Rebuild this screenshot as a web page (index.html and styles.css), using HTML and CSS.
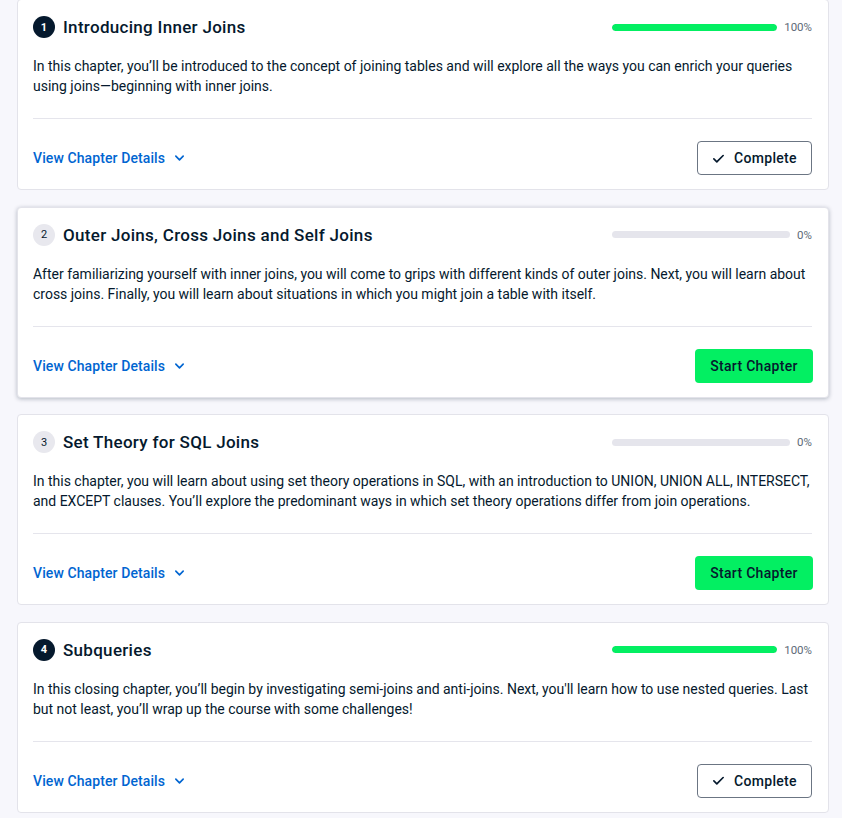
FILE: index.html
```html
<!DOCTYPE html>
<html>
<head>
<meta charset="utf-8">
<link rel="stylesheet" href="styles.css">
</head>
<body>
<div class="list">
  <section class="card">
    <div class="head">
      <span class="badge done">1</span>
      <h3 class="title">Introducing Inner Joins</h3>
      <div class="progress">
        <div class="track"><div class="fill" style="width:100%"></div></div>
        <span class="pct">100%</span>
      </div>
    </div>
    <p class="desc">In this chapter, you’ll be introduced to the concept of joining tables and will explore all the ways you can enrich your queries using joins—beginning with inner joins.</p>
    <div class="foot">
      <a class="details">View Chapter Details <svg class="chev" viewBox="0 0 12 12" width="12" height="12"><path d="M2 4l4 4 4-4" fill="none" stroke="currentColor" stroke-width="1.8" stroke-linecap="round" stroke-linejoin="round"/></svg></a>
      <button class="btn outline"><svg class="check" viewBox="0 0 14 14" width="13" height="13"><path d="M2 7.5l3.2 3.2L12 3.8" fill="none" stroke="currentColor" stroke-width="1.8" stroke-linecap="round" stroke-linejoin="round"/></svg>Complete</button>
    </div>
  </section>

  <section class="card raised">
    <div class="head">
      <span class="badge">2</span>
      <h3 class="title">Outer Joins, Cross Joins and Self Joins</h3>
      <div class="progress">
        <div class="track"><div class="fill" style="width:0%"></div></div>
        <span class="pct">0%</span>
      </div>
    </div>
    <p class="desc">After familiarizing yourself with inner joins, you will come to grips with different kinds of outer joins. Next, you will learn about cross joins. Finally, you will learn about situations in which you might join a table with itself.</p>
    <div class="foot">
      <a class="details">View Chapter Details <svg class="chev" viewBox="0 0 12 12" width="12" height="12"><path d="M2 4l4 4 4-4" fill="none" stroke="currentColor" stroke-width="1.8" stroke-linecap="round" stroke-linejoin="round"/></svg></a>
      <button class="btn primary">Start Chapter</button>
    </div>
  </section>

  <section class="card">
    <div class="head">
      <span class="badge">3</span>
      <h3 class="title">Set Theory for SQL Joins</h3>
      <div class="progress">
        <div class="track"><div class="fill" style="width:0%"></div></div>
        <span class="pct">0%</span>
      </div>
    </div>
    <p class="desc">In this chapter, you will learn about using set theory operations in SQL, with an introduction to UNION, UNION ALL, INTERSECT, and EXCEPT clauses. You’ll explore the predominant ways in which set theory operations differ from join operations.</p>
    <div class="foot">
      <a class="details">View Chapter Details <svg class="chev" viewBox="0 0 12 12" width="12" height="12"><path d="M2 4l4 4 4-4" fill="none" stroke="currentColor" stroke-width="1.8" stroke-linecap="round" stroke-linejoin="round"/></svg></a>
      <button class="btn primary">Start Chapter</button>
    </div>
  </section>

  <section class="card">
    <div class="head">
      <span class="badge done">4</span>
      <h3 class="title">Subqueries</h3>
      <div class="progress">
        <div class="track"><div class="fill" style="width:100%"></div></div>
        <span class="pct">100%</span>
      </div>
    </div>
    <p class="desc">In this closing chapter, you’ll begin by investigating semi-joins and anti-joins. Next, you'll learn how to use nested queries. Last but not least, you’ll wrap up the course with some challenges!</p>
    <div class="foot">
      <a class="details">View Chapter Details <svg class="chev" viewBox="0 0 12 12" width="12" height="12"><path d="M2 4l4 4 4-4" fill="none" stroke="currentColor" stroke-width="1.8" stroke-linecap="round" stroke-linejoin="round"/></svg></a>
      <button class="btn outline"><svg class="check" viewBox="0 0 14 14" width="13" height="13"><path d="M2 7.5l3.2 3.2L12 3.8" fill="none" stroke="currentColor" stroke-width="1.8" stroke-linecap="round" stroke-linejoin="round"/></svg>Complete</button>
    </div>
  </section>
</div>
</body>
</html>
```
FILE: styles.css
```css
html, body {
  margin: 0;
  padding: 0;
  background: #f7f7fc;
  font-family: "Roboto", "Noto Sans", sans-serif;
  color: #05192d;
}

.list {
  display: flex;
  flex-direction: column;
  gap: 16.5px;
  margin: -1px 13px 0 17px;
}

.card {
  background: #fff;
  border: 1px solid #e3e3ea;
  border-radius: 4px;
  padding: 15px 16px 14px 15px;
}

.card.raised {
  box-shadow: 0 1px 4px rgba(5, 25, 45, 0.28);
}

.head {
  display: flex;
  align-items: center;
  height: 24px;
}

.badge {
  width: 22px;
  height: 22px;
  border-radius: 50%;
  background: #e8e8ee;
  color: #05192d;
  font-size: 11px;
  display: flex;
  align-items: center;
  justify-content: center;
  flex: none;
  margin-right: 8px;
}

.badge.done {
  background: #05192d;
  color: #fff;
  font-weight: 700;
}

.title {
  margin: 0;
  font-size: 17px;
  font-weight: 500;
  flex: 1;
  letter-spacing: 0.3px;
  line-height: 24px;
}

.progress {
  display: flex;
  align-items: center;
  width: 200px;
  gap: 7px;
}

.track {
  flex: 1;
  height: 7px;
  border-radius: 4px;
  background: #e5e5ec;
  overflow: hidden;
}

.fill {
  height: 100%;
  background: #03ef62;
  border-radius: 4px;
}

.pct {
  font-size: 11.5px;
  color: #5d6a77;
}

.desc {
  margin: 17px 0 0;
  font-size: 14px;
  line-height: 20px;
  color: #05192d;
  padding-bottom: 22px;
  border-bottom: 1px solid #e5e5ec;
  letter-spacing: -0.01px;
}

.foot {
  display: flex;
  align-items: center;
  justify-content: space-between;
  margin-top: 22px;
  height: 34px;
}

.details {
  color: #0065d1;
  font-size: 14px;
  font-weight: 500;
  display: flex;
  align-items: center;
  gap: 9px;
  letter-spacing: 0.1px;
}

.chev {
  width: 11px;
}

.btn {
  font-family: inherit;
  font-size: 14px;
  font-weight: 500;
  height: 34px;
  border-radius: 4px;
  display: flex;
  align-items: center;
  justify-content: center;
  color: #05192d;
  cursor: pointer;
  letter-spacing: 0.3px;
}

.btn.outline {
  width: 115px;
  background: #fff;
  border: 1px solid #6b7583;
  gap: 9px;
}

.btn.primary {
  width: 118px;
  background: #03ef62;
  border: none;
  margin-right: -1px;
}
```
